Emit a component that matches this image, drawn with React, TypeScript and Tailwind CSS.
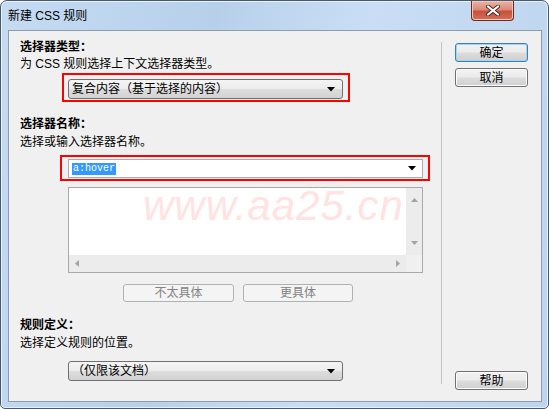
const Arrow = () => (
  <svg width="8" height="5" viewBox="0 0 8 5" className="shrink-0">
    <path d="M0 0h8L4 4.5z" fill="#000" />
  </svg>
);

const Combo = ({ text, className }: { text: string; className: string }) => (
  <div
    className={`${className} flex items-center justify-between rounded-[3px] border border-[#707070] bg-[linear-gradient(#f4f4f4_0%,#ececec_48%,#dddddd_52%,#d2d2d2_100%)] pl-[3px] pr-[7px] text-[12px] leading-none text-black`}
  >
    <span>{text}</span>
    <Arrow />
  </div>
);

const WinButton = ({ label, focused }: { label: string; focused?: boolean }) => (
  <div
    className={`flex h-[19px] w-[73px] items-center justify-center rounded-[3px] border text-[12px] leading-none text-black bg-[linear-gradient(#f2f2f2_0%,#ebebeb_48%,#dddddd_52%,#cfcfcf_100%)] ${
      focused
        ? "border-[#3c7fb1] shadow-[inset_0_0_0_1px_#9fd6f2]"
        : "border-[#707070] shadow-[inset_0_0_0_1px_#fcfcfc]"
    }`}
  >
    {label}
  </div>
);

const DisabledButton = ({ label, className }: { label: string; className: string }) => (
  <div
    className={`${className} flex h-[18px] items-center justify-center rounded-[3px] border border-[#adb2b5] bg-[#f4f4f4] text-[12px] leading-none text-[#838383]`}
  >
    {label}
  </div>
);

const ScrollArrow = ({ dir }: { dir: "up" | "down" | "left" | "right" }) => {
  const d = {
    up: "M0 4h7L3.5 0z",
    down: "M0 0h7L3.5 4z",
    left: "M4 0v7L0 3.5z",
    right: "M0 0v7L4 3.5z",
  }[dir];
  const horiz = dir === "left" || dir === "right";
  return (
    <svg width={horiz ? 4 : 7} height={horiz ? 7 : 4} viewBox={horiz ? "0 0 4 7" : "0 0 7 4"}>
      <path d={d} fill="#a3a3a3" />
    </svg>
  );
};

const App = () => {
  return (
    <div className="h-[409px] w-[549px] overflow-hidden bg-white font-['Liberation_Sans','Noto_Sans_CJK_SC',sans-serif]">
      <div className="relative flex h-[409px] w-[549px] flex-col rounded-t-[7px] rounded-b-[5px] border border-[#4a5a6c] bg-[linear-gradient(100deg,#c4dbf2_0%,#b7d0ea_35%,#c9def4_60%,#bcd4ee_100%)] shadow-[inset_0_0_0_1px_#e8f2fc]">
        {/* title bar */}
        <div className="flex h-[29px] items-center justify-between pl-[7px] pr-[34px]">
          <span className="text-[12px] text-black">新建 CSS 规则</span>
          <div className="-mt-[9px] flex h-[20px] w-[43px] items-center justify-center rounded-b-[4px] border border-t-0 border-[#70281f] bg-[linear-gradient(#eab3a5_0%,#dc8a78_45%,#c8503c_55%,#d2705a_100%)] shadow-[inset_0_0_0_1px_#f0c8bc]">
            <svg width="14" height="11" viewBox="0 0 14 11">
              <path d="M2 1.5l10 8M12 1.5l-10 8" stroke="#4a2a26" strokeWidth="4" strokeLinecap="round" />
              <path d="M2 1.5l10 8M12 1.5l-10 8" stroke="#ffffff" strokeWidth="2.2" strokeLinecap="round" />
            </svg>
          </div>
        </div>

        {/* client area */}
        <div className="mx-[7px] flex h-[372px] w-[534px] border border-[#8d9cae] bg-[#f0f0f0]">
          {/* left column */}
          <div className="flex w-[432px] flex-col pl-[11px] pt-[7px] text-[12px] text-black">
            <div className="h-[18px] font-bold leading-[18px]">选择器类型：</div>
            <div className="h-[17px] leading-[17px]">为 CSS 规则选择上下文选择器类型。</div>

            <div className="ml-[42px] h-[29px] w-[288px] border-2 border-[#ff0000] pl-[4px] pt-[4px]">
              <Combo text="复合内容（基于选择的内容）" className="h-[20px] w-[275px]" />
            </div>

            <div className="mt-[13px] h-[18px] font-bold leading-[18px]">选择器名称：</div>
            <div className="mt-[1px] h-[17px] leading-[17px]">选择或输入选择器名称。</div>

            <div className="ml-[40px] mt-[4px] h-[26px] w-[370px] border-2 border-[#ff0000] pl-[6px] pt-[2px]">
              <div className="flex h-[19px] w-[355px] items-center justify-between border border-[#abadb3] bg-white pl-[3px] pr-[6px]">
                <span className="bg-[#3399ff] px-px font-['Liberation_Mono',monospace] text-[10px] leading-[12px] text-white">
                  a:hover
                </span>
                <Arrow />
              </div>
            </div>

            {/* list box */}
            <div className="relative ml-[48px] mt-[6px] flex h-[86px] w-[355px] flex-col border border-[#a9a9a9] bg-[#ececec]">
              <div className="flex h-[67px]">
                <div className="relative flex-1 overflow-hidden rounded-br-[2px] bg-white">
                  <span className="absolute left-[74px] top-[-6px] whitespace-nowrap text-[42px] italic leading-[48px] tracking-[1px] text-[#ffe3e3]">
                    www.aa25.cn
                  </span>
                </div>
                <div className="flex w-[16px] flex-col items-center justify-between py-[10px]">
                  <ScrollArrow dir="up" />
                  <ScrollArrow dir="down" />
                </div>
              </div>
              <div className="flex h-[17px] items-center">
                <div className="flex flex-1 items-center justify-between px-[6px]">
                  <ScrollArrow dir="left" />
                  <ScrollArrow dir="right" />
                </div>
                <div className="h-[17px] w-[16px] bg-[#f0f0f0]" />
              </div>
            </div>

            <div className="mt-[11px] flex gap-[9px]">
              <DisabledButton label="不太具体" className="ml-[103px] w-[111px]" />
              <DisabledButton label="更具体" className="w-[110px]" />
            </div>

            <div className="mt-[14px] h-[18px] font-bold leading-[18px]">规则定义：</div>
            <div className="mt-[1px] h-[17px] leading-[17px]">选择定义规则的位置。</div>

            <div className="ml-[48px] mt-[9px]">
              <Combo text="（仅限该文档）" className="h-[20px] w-[275px]" />
            </div>
          </div>

          {/* separator */}
          <div className="mb-[17px] mt-[11px] w-px bg-[#c4c4c4]" />

          {/* right column */}
          <div className="flex flex-1 flex-col pl-[13px] pt-[12px] pb-[11px]">
            <WinButton label="确定" focused />
            <div className="mt-[6px]">
              <WinButton label="取消" />
            </div>
            <div className="flex-1" />
            <WinButton label="帮助" />
          </div>
        </div>
      </div>
    </div>
  );
};

export default App;
